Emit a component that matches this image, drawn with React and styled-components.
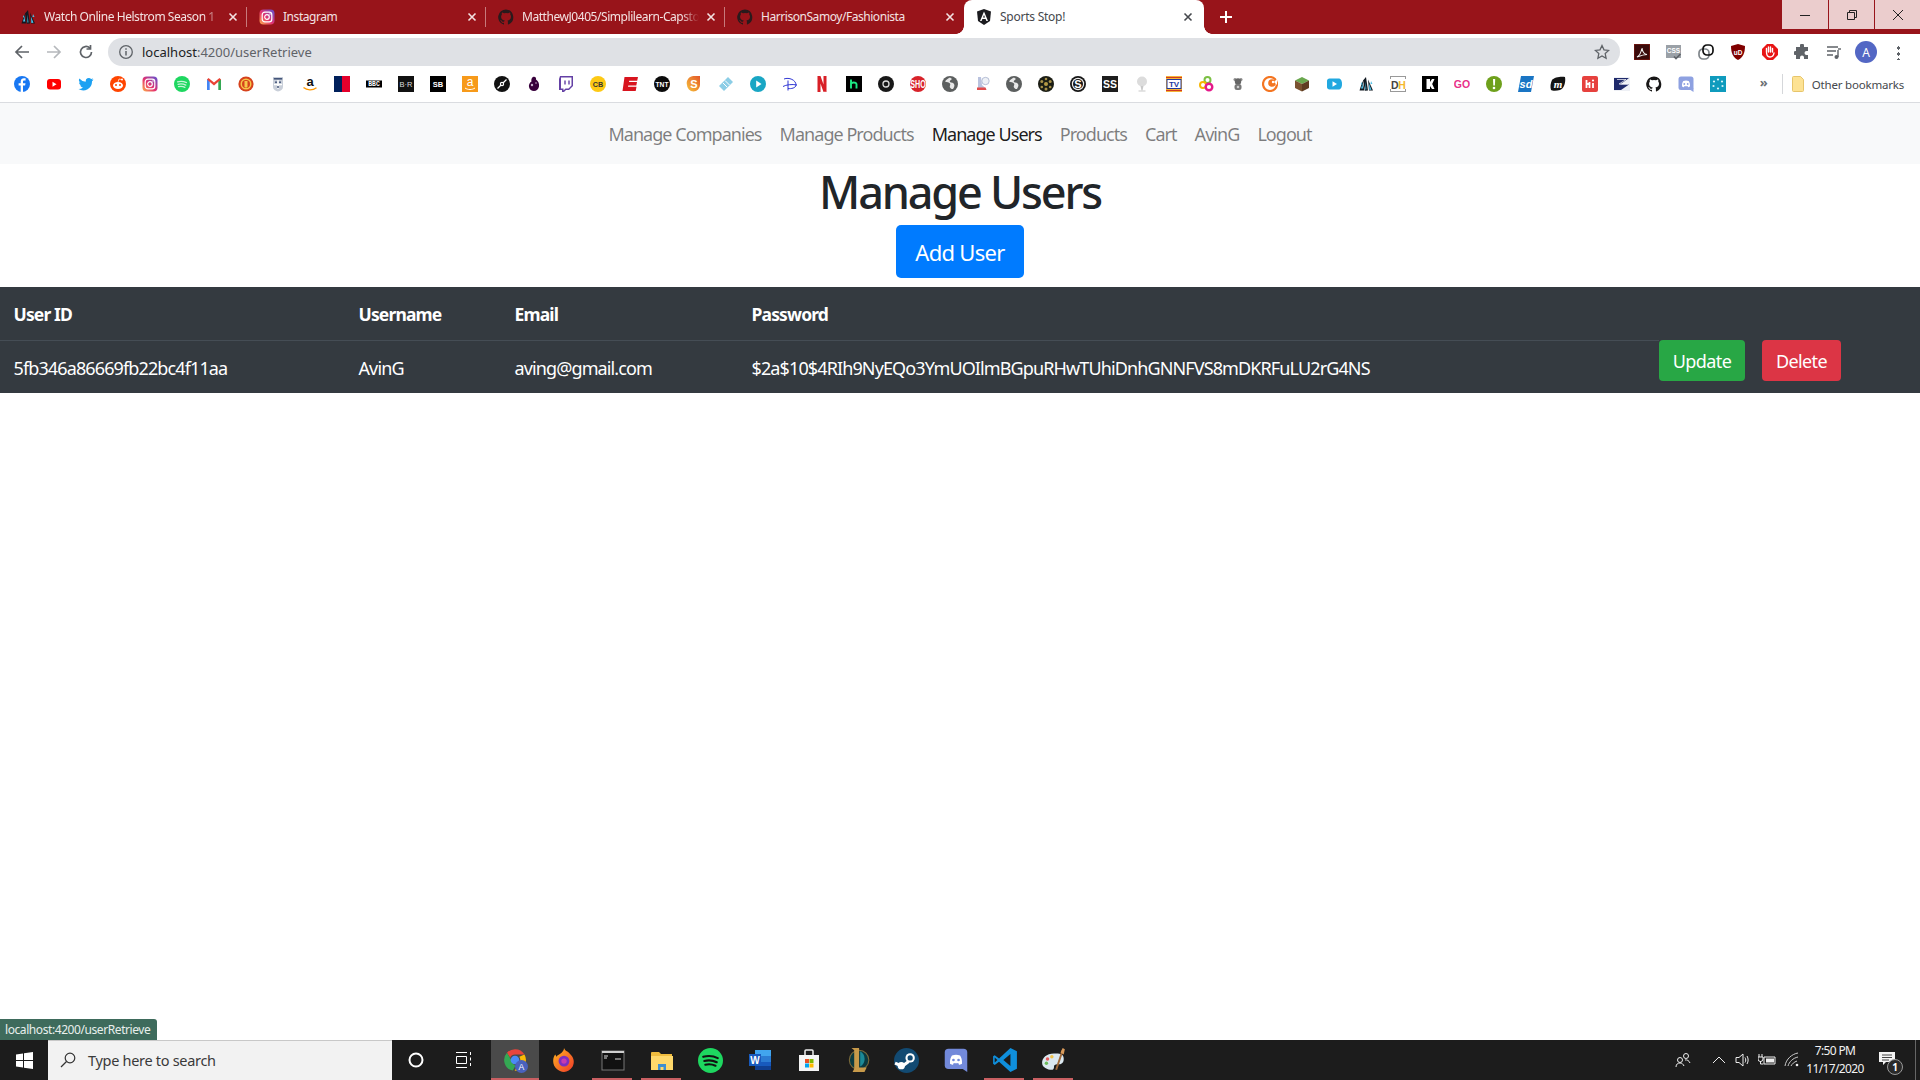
import React from "react";
import styled, { createGlobalStyle } from "styled-components";

const FONT = `"Noto Sans", "Open Sans", "Liberation Sans", sans-serif`;

const Global = createGlobalStyle`
  html, body { margin: 0; padding: 0; height: 100%; background: #fff; overflow: hidden; }
  body { font-family: ${FONT}; color: #212529; }
  * { box-sizing: border-box; }
`;

/* ---------- icons ---------- */
const T = ({ x = 8, y = 11, s = 7, c = "#fff", w = 700, f = "Liberation Sans", children, it, len }) => (
  <text x={x} y={y} fontSize={s} fill={c} fontWeight={w} fontFamily={f} textAnchor="middle" fontStyle={it ? "italic" : "normal"} textLength={len} lengthAdjust={len ? "spacingAndGlyphs" : undefined}>{children}</text>
);

const GH = "M8 .4a7.8 7.8 0 0 0-2.5 15.2c.4.1.5-.2.5-.4v-1.4c-2.2.5-2.6-1-2.6-1-.4-.9-.9-1.2-.9-1.2-.7-.5.1-.5.1-.5.8.1 1.2.8 1.2.8.7 1.2 1.9.9 2.4.7.1-.5.3-.9.5-1.1-1.7-.2-3.6-.9-3.6-3.9 0-.9.3-1.6.8-2.1-.1-.2-.4-1 .1-2.1 0 0 .7-.2 2.1.8a7.4 7.4 0 0 1 3.9 0c1.5-1 2.1-.8 2.1-.8.4 1.1.2 1.9.1 2.1.5.5.8 1.2.8 2.1 0 3-1.8 3.7-3.6 3.9.3.2.5.7.5 1.4v2.1c0 .2.1.5.5.4A7.8 7.8 0 0 0 8 .4z";

const ICONS = {
  fb: <><circle cx="8" cy="8" r="8" fill="#1877f2" /><path d="M9 16V9.6h2.1l.4-2.4H9V5.7c0-.8.3-1.3 1.3-1.3h1.3V2.3C11.2 2.2 10.6 2.2 10 2.2c-2 0-3.3 1.2-3.3 3.3v1.7H4.6v2.4h2.1V16z" fill="#fff" /></>,
  yt: <><rect x="1" y="3" width="14" height="10.5" rx="3" fill="#f00" /><path d="M6.5 5.8v5l4-2.5z" fill="#fff" /></>,
  tw: <path d="M15.5 3.4c-.6.3-1.1.4-1.8.5.6-.4 1.1-1 1.4-1.7-.6.4-1.3.6-2 .8a3.1 3.1 0 0 0-5.3 2.8A8.8 8.8 0 0 1 1.4 2.5a3.1 3.1 0 0 0 1 4.1c-.5 0-1-.2-1.4-.4 0 1.5 1.1 2.8 2.5 3.1-.5.1-.9.1-1.4 0 .4 1.2 1.5 2.1 2.9 2.1A6.3 6.3 0 0 1 .5 13a8.8 8.8 0 0 0 13.5-7.8c.6-.5 1.1-1 1.5-1.8z" fill="#1da1f2" />,
  rd: <><circle cx="8" cy="8" r="8" fill="#ff4500" /><ellipse cx="8" cy="9.5" rx="5" ry="3.5" fill="#fff" /><circle cx="6" cy="9" r="1" fill="#ff4500" /><circle cx="10" cy="9" r="1" fill="#ff4500" /><circle cx="12" cy="3.5" r="1" fill="#fff" /><path d="M8 6l1-3 3 .6" stroke="#fff" strokeWidth=".7" fill="none" /></>,
  ig: <><defs><linearGradient id="igG" x1="0" y1="1" x2="1" y2="0"><stop offset="0" stopColor="#fdb34a" /><stop offset=".45" stopColor="#e5326f" /><stop offset="1" stopColor="#5b54d6" /></linearGradient></defs><rect x=".5" y=".5" width="15" height="15" rx="4" fill="url(#igG)" /><rect x="3.2" y="3.2" width="9.6" height="9.6" rx="2.6" fill="none" stroke="#fff" strokeWidth="1.2" /><circle cx="8" cy="8" r="2.3" fill="none" stroke="#fff" strokeWidth="1.2" /><circle cx="11" cy="5" r=".7" fill="#fff" /></>,
  sp: <><circle cx="8" cy="8" r="8" fill="#1ed760" /><path d="M3.5 5.8c3-.8 6.2-.6 9 .8M4 8.3c2.5-.7 5.3-.5 7.8.8M4.5 10.7c2.1-.5 4.4-.4 6.4.7" stroke="#fff" strokeOpacity=".75" strokeWidth="1.2" strokeLinecap="round" fill="none" /></>,
  gm: <><path d="M1 14V3l2.7 2v9z" fill="#4285f4" /><path d="M15 14V3l-2.7 2v9z" fill="#34a853" /><path d="M1 3.5 2.5 2 8 6.5 13.5 2 15 3.5 8 9.5z" fill="#ea4335" /></>,
  mu: <><circle cx="8" cy="8" r="7.6" fill="#d6421c" /><circle cx="8" cy="8" r="5.5" fill="#f6c64a" /><circle cx="8" cy="8" r="4" fill="#d6421c" /><path d="M6.5 5h3v5.5l-1.500 1.500-1.500-1.500z" fill="#f6c64a" /></>,
  en: <><path d="M3 1h10v10c0 2.5-2.5 4-5 4.500C5.500 15 3 13.500 3 11z" fill="#c9cfd9" /><path d="M3.800 2h8.400v1.600H3.800z" fill="#44557a" /><path d="M8 4v9M4 8.500h8" stroke="#fff" strokeWidth="1.400" /><circle cx="6" cy="6.300" r="1" fill="#44557a" /><circle cx="10" cy="6.300" r="1" fill="#44557a" /><circle cx="8" cy="11" r="1" fill="#44557a" /></>,
  az: <><T y={10} s={13} c="#111" w={700}>a</T><path d="M1.500 11.500c3.500 3 9 3.200 13 .3" stroke="#f90" strokeWidth="1.300" fill="none" /></>,
  fr: <><rect width="8" height="16" fill="#00205b" /><rect x="8" width="8" height="16" fill="#e4002b" /></>,
  bbc: <><rect y="4.500" width="16" height="7" fill="#000" /><T x={8} y={10.400} s={6.400} c="#fff" f="Liberation Mono">BBC</T></>,
  br: <><rect width="16" height="16" fill="#111" /><T y={11} s={7.500} c="#ddd" w={400}>B·R</T></>,
  sb: <><rect width="16" height="16" fill="#000" /><T y={11} s={7.500}>SB</T></>,
  azo: <><rect width="16" height="16" fill="#f79a1a" /><T y={10} s={12} w={400}>a</T><path d="M3 12c3 2 7 2 10 0" stroke="#fff" strokeWidth="1" fill="none" /></>,
  disc: <><circle cx="8" cy="8" r="8" fill="#111" /><path d="M12.500 3.500 3.500 12.500" stroke="#fff" strokeWidth="1.200" /><circle cx="8" cy="8" r="2.200" fill="#fff" /><circle cx="8" cy="8" r="1" fill="#111" /></>,
  pl: <><path d="M7 1c2-.8 3.500.8 3 2.500 2 1.200 3.500 4 3 7-.4 2.500-2.500 4.500-5 4.500s-4.500-1.500-5-4c-.4-2 .5-4.500 2.500-5.500C5 4 5.500 1.800 7 1z" fill="#38003c" /><circle cx="6" cy="9" r="1.200" fill="#c8b3cc" /><circle cx="10" cy="7" r=".8" fill="#c8b3cc" /></>,
  tt: <><path d="M2 0h13v10l-4 4H8l-2 2H4v-2H1V3z" fill="#6441a5" /><path d="M3 1.500h10.500v8l-3 3H7.500l-2 2v-2H3z" fill="#fff" /><path d="M7 4.500v4M11 4.500v4" stroke="#6441a5" strokeWidth="1.400" /></>,
  cb: <><circle cx="8" cy="8" r="8" fill="#fdc915" /><T y={10.600} s={7.200} c="#333">CB</T></>,
  espn: <path d="M2.500 1H16l-.8 3.800H7.200l-.2 1.200h8l-.7 3.400H6.300l-.3 1.300h8.500L13.700 15H.5z" fill="#d8141e" />,
  tnt: <><circle cx="8" cy="8" r="8" fill="#0b0b0b" /><T y={10.600} s={7.500} len={13}>TNT</T></>,
  so: <><defs><linearGradient id="soG" x1="0" y1="1" x2="1" y2="0"><stop offset="0" stopColor="#f7c33a" /><stop offset="1" stopColor="#e4572a" /></linearGradient></defs><path d="M8 0h6v9a6.500 6.500 0 0 1-13 0 7 7 0 0 1 7-9z" fill="url(#soG)" /><T y={12} s={11} w={700}>S</T></>,
  tk: <><path d="M1 10 10 1l5 5-9 9z" fill="#8bcde6" /><path d="M5 7l4 4M7 4.500l4.500 4.500" stroke="#fff" strokeWidth="1" /></>,
  pp: <><circle cx="8" cy="8" r="8" fill="#19a6c4" /><path d="M6.200 4.500v7l5.300-3.500z" fill="#fff" /></>,
  dz: <><path d="M2 3c5-2 12 1 12 6 0 3-5 4-8 3.500M6 4.500v10M1 10.500c3-1.800 9-2.500 14-1.500" stroke="#2e35d4" strokeWidth="1" fill="none" /></>,
  nf: <path d="M3.500 0h3l3 8.500V0h3v16c-1-.2-2-.2-3-.1L6.500 7.500V16l-3 .3z" fill="#d81f26" />,
  hu: <><rect width="16" height="16" fill="#000" /><path d="M5 3.500v9M5 7.500c.5-1 4.800-1.700 5.500.5v4.500" stroke="#1ce783" strokeWidth="1.900" fill="none" /></>,
  oo: <><circle cx="8" cy="8" r="8" fill="#181818" /><circle cx="8" cy="8" r="3" fill="none" stroke="#ddd" strokeWidth="1.300" /></>,
  sho: <><circle cx="8" cy="8" r="8" fill="#d8232a" /><T y={11.800} s={10.500} len={15.500}>SHO</T></>,
  gl: <><circle cx="8" cy="8" r="8" fill="#5c5f5f" /><path d="M8 1.500c-2 1-4 2-5 4 2 1 4 .5 5 2s-1 2.500 0 4 1 1.500 3 1.500c1-2 2-3 1-5s-3-1-4-2 1-2 2-3z" fill="#e8e8e8" /></>,
  sc: <><path d="M4 1h3l1 8 4 3.500-1 1.500H4z" fill="#b9c2de" /><path d="M3 11.500h8.500l1 2.500H3z" fill="#e14b4b" /><circle cx="11.500" cy="5" r="3.700" fill="#eef1f6" stroke="#8d9ac0" strokeWidth=".6" /></>,
  bl: <><circle cx="8" cy="8" r="8" fill="#1b1d14" /><circle cx="8" cy="8" r="2" fill="#b59a45" /><circle cx="3.800" cy="5.500" r="1.500" fill="#a8914a" /><circle cx="12.200" cy="5.500" r="1.500" fill="#a8914a" /><circle cx="8" cy="13" r="1.500" fill="#a8914a" /><circle cx="8" cy="3" r="1.300" fill="#a8914a" /><circle cx="3.800" cy="11" r="1.300" fill="#a8914a" /><circle cx="12.200" cy="11" r="1.300" fill="#a8914a" /></>,
  ss: <><circle cx="8" cy="8" r="8" fill="#161616" /><circle cx="8" cy="8" r="6.200" fill="#eee" /><circle cx="8" cy="8" r="5" fill="#161616" /><T y={12} s={11} w={700}>S</T></>,
  sq: <><rect width="16" height="16" fill="#1d1d1d" /><T y={12} s={10.500}>SS</T></>,
  gf: <><circle cx="8" cy="5.500" r="5" fill="#dcdcdc" /><path d="M6.500 10h3l-1 4.500h-1z" fill="#c9c9c9" /><path d="M4.500 15h7" stroke="#c9c9c9" /></>,
  tv: <><rect width="16" height="16" fill="#f5b335" /><path d="M0 1.500h16M0 14.500h16" stroke="#d13a22" strokeWidth="1" /><rect x="1" y="3.500" width="14" height="9" fill="#fff" stroke="#223a9e" /><T y={11} s={8} c="#223a9e" f="Liberation Sans">TV</T></>,
  co: <><circle cx="9.500" cy="4" r="3" fill="none" stroke="#7bc043" strokeWidth="2" /><circle cx="5" cy="9" r="3" fill="none" stroke="#f7b500" strokeWidth="2" /><circle cx="11" cy="11" r="3.300" fill="none" stroke="#e5198a" strokeWidth="2.400" /></>,
  br2: <><circle cx="5" cy="3.500" r="1.500" fill="#8a8a8a" /><circle cx="11" cy="3.500" r="1.500" fill="#8a8a8a" /><circle cx="8" cy="5.500" r="3.200" fill="#666" /><rect x="4.500" y="8" width="7" height="6" rx="2.500" fill="#777" /><circle cx="8" cy="11" r="1.300" fill="#ccc" /></>,
  cr: <><circle cx="8" cy="8" r="7" fill="none" stroke="#f47521" strokeWidth="2.200" /><circle cx="10" cy="7" r="3.800" fill="#f47521" /><circle cx="11" cy="6" r="1.200" fill="#fff" /><path d="M15 3v6l-3-3z" fill="#fff" /></>,
  mc: <><path d="M8 1l7 3.500L8 8 1 4.500z" fill="#6aa84f" /><path d="M1 4.500 8 8v7.500l-7-3.500z" fill="#7a5230" /><path d="M15 4.500 8 8v7.500l7-3.500z" fill="#5e3d22" /></>,
  bp: <><path d="M1 5c0-1.500 1-2.500 2.500-2.500h9c1.800 0 3.500 1.500 3.500 5.500s-1.700 5.500-3.500 5.500h-9C2 13.500 1 12.500 1 11z" fill="#21a8e0" /><path d="M6.500 5.300v5.400L11 8z" fill="#fff" /></>,
  hs: <><path d="M1.500 14.500 4.500 5l2 9.500z" fill="#101820" /><path d="M5 4.500 8 1l2 13.500-3 .3z" fill="#101820" /><path d="M10 3.500 15 14.500h-4z" fill="#101820" /><path d="M3 12.500l1.300-4.500 1 4.500zM7.600 5.500l.8 8-1-.1zM11 7.500l2.500 6.300-2.200.1z" fill="#4fc0e8" /><path d="M2.800 8 4 6l.6 3zM13 5l1.500 3-2 0z" fill="#4fc0e8" /></>,
  dh: <><path d="M0 .5h16M0 15.500h16M.5 0v16M15.500 0v16" stroke="#999" strokeWidth="1" /><rect y="3" width="16" height="10" fill="#fff" /><text x="1" y="12.500" fontSize="10.500" fontWeight="700" fill="#444" fontFamily="Liberation Sans">D</text><text x="8.300" y="12.500" fontSize="10.500" fontWeight="700" fill="#f5b82e" fontFamily="Liberation Sans">H</text></>,
  kk: <><rect width="16" height="16" fill="#000" /><path d="M4.500 3h3.500v3l2-3h2.500l-2.300 5 2.300 5H10L8 10v3H4.500z" fill="#fff" /></>,
  go: <T y={12} s={10.500} c="#e8308a" w={700}>GO</T>,
  ex: <><circle cx="8" cy="8" r="8" fill="#6ea01c" /><path d="M7 3h2.200l-.3 6.500H7.300z" fill="#fff" /><circle cx="8" cy="12" r="1.300" fill="#fff" /></>,
  sd: <><path d="M3 0h13l-3 16H0z" fill="#1a75c4" /><T y={12} s={11} it w={700}>sd</T></>,
  mm: <><path d="M2 4c2-3 10-4 13-3 1 5-1 12-5 13-3 1-8 1-9 0-1-3-.5-7 1-10z" fill="#141414" /><T y={11.500} s={11} it f="Liberation Serif">m</T></>,
  hi: <><rect width="16" height="16" rx="2" fill="#e6413e" /><path d="M4.500 4v8M4.500 8h3M7.500 6v6M11 7v5" stroke="#fff" strokeWidth="1.800" /><circle cx="11" cy="4.500" r="1.100" fill="#fff" /></>,
  us: <><rect y="1" width="16" height="14" fill="#eef0f5" /><path d="M0 2h15L6 8.500 15 8.500 7 14H0z" fill="#1f2a6b" /><path d="M3 3.500h9L5 8h9" stroke="#fff" strokeWidth=".7" fill="none" /></>,
  gh: <path d={GH} fill="#181717" />,
  gh2: <path d={GH} fill="#2a1a1c" />,
  dc: <><rect x=".5" y=".5" width="15" height="13.500" rx="2.500" fill="#8ea1e1" /><path d="M15.500 12v4l-3-2z" fill="#8ea1e1" /><path d="M4 10.500c-.2-2.500.5-4.500 1.300-5.500 2-.7 3.400-.7 5.400 0 .8 1 1.500 3 1.300 5.500-1 .6-1.500.7-2 .7L9.500 10c-1 .3-2 .3-3 0l-.5 1.200c-.5 0-1-.1-2-.7z" fill="#fff" /><circle cx="6.300" cy="8" r=".9" fill="#8ea1e1" /><circle cx="9.700" cy="8" r=".9" fill="#8ea1e1" /></>,
  te: <><rect width="16" height="16" fill="#0f9bbd" /><g fill="#d8f4f9"><circle cx="8" cy="3.500" r="1.100" /><circle cx="12" cy="5.500" r="1.100" /><circle cx="12.500" cy="10" r="1.100" /><circle cx="8" cy="12.500" r="1.100" /><circle cx="3.500" cy="10" r="1.100" /><circle cx="4" cy="5.500" r="1.100" /></g></>,
  ng: <><path d="M8 0 1 2.500l1 9.500L8 16l6-4 1-9.500z" fill="#1b1b1f" /><path d="M8 2.500 4 12h1.600l.8-2h3.200l.8 2H12zM7 8.500l1-2.600 1 2.600z" fill="#fff" /></>,
  pdf: <><rect width="16" height="16" fill="#3a0a0a" stroke="#8c1c13" /><path d="M3 13c2-1 4-4 5-9 .3 3 2 6 5 6.500-3 0-6 1-10 2.500z" fill="none" stroke="#eee" strokeWidth="1.100" /></>,
  css: <><rect y="1" width="15" height="13" fill="#9aa0a6" /><T x={7.500} y={9} s={6.500} w={700}>CSS</T><path d="M8 12.500l2 2 4.500-4.500" stroke="#5f6368" strokeWidth="1.700" fill="none" /></>,
  ln: <><rect x="1" y="5" width="10" height="10" rx="4" fill="none" stroke="#80868b" strokeWidth="1.700" /><rect x="5" y="1" width="10" height="10" rx="4" fill="none" stroke="#111" strokeWidth="1.700" /></>,
  ub: <><path d="M8 0 15 2c0 7-2 11.500-7 14C3 13.500 1 9 1 2z" fill="#800000" /><T y={10.500} s={6.500}>uD</T></>,
  stop: <><path d="M5 0h6l5 5v6l-5 5H5l-5-5V5z" fill="#e81515" /><path d="M4.500 8V4.500M6.500 8V3M8.500 8V3M10.500 8V4.500M4.500 8c0 3 1.500 5 3.500 5s3.500-1 4-4" stroke="#fff" strokeWidth="1.400" fill="none" strokeLinecap="round" /></>,
  pz: <path d="M6 1.500a2 2 0 0 1 4 0V3h4v4h-1.500a2 2 0 0 0 0 4H14v4h-4v-1.500a2 2 0 0 0-4 0V15H2v-4h-.5a2 2 0 0 1 0-4H2V3h4z" fill="#5f6368" />,
  mq: <><path d="M1 3h11M1 7h9M1 11h6" stroke="#5f6368" strokeWidth="1.400" /><path d="M12 6v7" stroke="#5f6368" strokeWidth="1.400" /><circle cx="10.500" cy="13" r="2" fill="#5f6368" /><path d="M12 5h3" stroke="#5f6368" strokeWidth="1.400" /></>,
};

const Icon = ({ k, size = 16 }) => (
  <svg width={size} height={size} viewBox="0 0 16 16" style={{ flex: "none", display: "block" }}>{ICONS[k]}</svg>
);

/* ---------- browser tab strip ---------- */
const TabStrip = styled.div`
  height: 34px;
  background: #98141a;
  display: flex;
  align-items: center;
  padding-left: 8px;
`;
const Tab = styled.div`
  width: 238px;
  height: 34px;
  display: flex;
  align-items: center;
  padding: 0 5.5px 0 12px;
  flex: none;
  position: relative;
  ${(p) => p.$active && `
    background: #fff;
    border-radius: 8px 8px 0 0;
    width: 240px;
    padding-right: 8px;
    &::before, &::after {
      content: "";
      position: absolute;
      bottom: 0;
      width: 8px;
      height: 8px;
    }
    &::before { left: -8px; background: radial-gradient(circle at 0 0, transparent 7.5px, #fff 8px); }
    &::after { right: -8px; background: radial-gradient(circle at 100% 0, transparent 7.5px, #fff 8px); }
  `}
`;
const TabTitle = styled.span`
  flex: 1;
  min-width: 0;
  margin-left: 8px;
  font-size: 12px;
  line-height: 16px;
  margin-top: -1px;
  letter-spacing: ${(p) => (p.$active ? "-0.25px" : "-0.45px")};
  white-space: nowrap;
  overflow: hidden;
  color: ${(p) => (p.$active ? "#45484d" : "#f3e2e2")};
  ${(p) => p.$fade && `
    -webkit-mask-image: linear-gradient(90deg, #000 90%, transparent 100%);
    mask-image: linear-gradient(90deg, #000 90%, transparent 100%);
  `}
`;
const TabClose = styled.svg`
  width: 16px;
  height: 16px;
  flex: none;
  margin-left: 4px;
  stroke: ${(p) => (p.$active ? "#45484d" : "#f3e2e2")};
  stroke-width: 1.6;
`;
const TabSep = styled.div`
  width: 1px;
  height: 20px;
  flex: none;
  background: ${(p) => (p.$hidden ? "transparent" : "#c77a7c")};
`;
const NewTab = styled.svg`
  width: 14px;
  height: 14px;
  margin-left: 15px;
  flex: none;
  stroke: #fff;
  stroke-width: 2;
`;
const WindowControls = styled.div`
  margin-left: auto;
  align-self: flex-start;
  display: flex;
  height: 29px;
`;
const WinBtn = styled.div`
  width: 46px;
  height: 29px;
  background: #ebcdcd;
  display: flex;
  align-items: center;
  justify-content: center;
  & + & { border-left: 1px solid #98141a; }
  svg { width: 12px; height: 12px; stroke: #222; fill: none; stroke-width: 1; }
`;

/* ---------- toolbar ---------- */
const Toolbar = styled.div`
  height: 32px;
  background: #fff;
  display: flex;
  align-items: flex-end;
  padding: 0 14px;
  gap: 16px;
`;
const ToolIcon = styled.div`
  width: 16px;
  height: 28px;
  flex: none;
  display: flex;
  align-items: center;
  justify-content: center;
  position: relative;
  svg.nav { width: 16px; height: 16px; fill: none; stroke-width: 1.7; stroke: ${(p) => (p.$dim ? "#b5b8bc" : "#5f6368")}; }
`;
const UrlBar = styled.div`
  width: 1512px;
  height: 28px;
  margin: 0 -2px;
  flex: none;
  border-radius: 14px;
  background: #dfe1e5;
  display: flex;
  align-items: center;
  padding: 0 10px 0 10px;
  font-size: 13px;
  letter-spacing: 0;
  color: #5f6368;
`;
const UrlInfo = styled.svg`
  width: 16px;
  height: 16px;
  stroke: #5f6368;
  fill: none;
  flex: none;
  margin-right: 8px;
`;
const UrlHost = styled.span`color: #202124;`;
const UrlStar = styled.svg`
  width: 16px;
  height: 16px;
  stroke: #5f6368;
  stroke-width: 1.3;
  fill: none;
  margin-left: auto;
`;
const Avatar = styled.div`
  width: 22px;
  height: 22px;
  flex: none;
  border-radius: 50%;
  background: #5367c4;
  color: #fff;
  font-size: 12px;
  display: flex;
  align-items: center;
  justify-content: center;
`;
const Kebab = styled.div`
  width: 3px;
  height: 15px;
  background: radial-gradient(circle, #5f6368 1.5px, transparent 1.7px) 0 0 / 3px 6px repeat-y;
`;

/* ---------- bookmarks ---------- */
const BookmarkBar = styled.div`
  height: 37px;
  background: #fff;
  border-bottom: 1px solid #dadce0;
  display: flex;
  align-items: center;
  padding: 0 14px;
  gap: 16px;
`;
const OverflowMark = styled.span`
  margin-left: auto;
  font-size: 13px;
  font-weight: 700;
  color: #6b6f74;
  width: 12px;
  line-height: 1;
  margin-top: -3px;
`;
const BarSep = styled.div`
  width: 1px;
  height: 20px;
  background: #d5d7da;
  margin-left: -6px;
`;
const OtherBookmarks = styled.div`
  display: flex;
  align-items: center;
  gap: 8px;
  margin-left: -7px;
  margin-right: 2px;
  font-size: 11.5px;
  letter-spacing: -0.2px;
  color: #45484d;
  white-space: nowrap;
`;

/* ---------- the app ---------- */
const Page = styled.div`
  height: 100vh;
  display: flex;
  flex-direction: column;
  overflow: hidden;
`;
const Viewport = styled.div`
  flex: 1;
  min-height: 0;
  position: relative;
  background: #fff;
`;
const Navbar = styled.nav`
  height: 61px;
  background: #f8f9fa;
  display: flex;
  align-items: center;
  justify-content: center;
`;
const NavLink = styled.a`
  padding: 0 9px;
  font-size: 18px;
  letter-spacing: -0.95px;
  color: ${(p) => (p.$active ? "rgba(0,0,0,.9)" : "rgba(0,0,0,.5)")};
  white-space: nowrap;
`;
const Title = styled.h1`
  margin: 0 0 7px;
  height: 54px;
  line-height: 56px;
  font-size: 45px;
  font-weight: 500;
  text-align: center;
  letter-spacing: -2.2px;
  color: #212529;
`;
const Center = styled.div`
  display: flex;
  justify-content: center;
  margin-bottom: 9px;
`;
const AddButton = styled.button`
  width: 128px;
  height: 53px;
  border: 0;
  border-radius: 5px;
  padding: 0;
  background: #007bff;
  color: #fff;
  font: 400 22px ${FONT};
  letter-spacing: -0.7px;
`;
const Table = styled.div`
  background: #343a40;
  color: #fff;
  font-size: 18px;
`;
const Row = styled.div`
  display: grid;
  grid-template-columns: 345px 156px 237px 921px 1fr;
`;
const HeadCell = styled.div`
  height: 54px;
  padding: 15px 14px 0 13.5px;
  line-height: 24px;
  font-weight: 700;
  font-size: 17.5px;
  letter-spacing: -0.85px;
  border-bottom: ${(p) => (p.$last ? "0" : "1px solid #454d55")};
`;
const Cell = styled.div`
  height: 52px;
  padding: 15px 14px 0 13.5px;
  line-height: 24px;
  letter-spacing: -0.88px;
  white-space: nowrap;
`;
const ActionCell = styled.div`
  display: flex;
  align-items: flex-start;
  gap: 17px;
  margin-top: -1px;
`;
const ActionButton = styled.button`
  width: ${(p) => p.$w}px;
  height: 41px;
  border: 0;
  border-radius: 4px;
  padding: 0;
  background: ${(p) => p.$bg};
  color: #fff;
  font: 400 18px ${FONT};
  letter-spacing: -0.6px;
`;
const StatusBubble = styled.div`
  position: absolute;
  left: 0;
  bottom: 0;
  height: 21px;
  width: 157px;
  padding-left: 5px;
  background: #3e6b5c;
  color: #e8efec;
  font-size: 12px;
  line-height: 21px;
  letter-spacing: -0.42px;
  border-top-right-radius: 3px;
  white-space: nowrap;
`;

/* ---------- taskbar ---------- */
const Taskbar = styled.div`
  height: 40px;
  background: #1c1c1c;
  display: flex;
  align-items: stretch;
  color: #fff;
`;
const StartCell = styled.div`
  width: 48px;
  display: flex;
  align-items: center;
  justify-content: center;
`;
const SearchBox = styled.div`
  width: 344px;
  background: #f2f2f2;
  border-top: 1px solid #c8c8c8;
  display: flex;
  align-items: center;
  padding: 0 0 2px 12px;
  gap: 12px;
  color: #3a3a3a;
  font-size: 14.5px;
  letter-spacing: -0.3px;
`;
const TaskCell = styled.div`
  width: ${(p) => p.$w || 49}px;
  flex: none;
  display: flex;
  align-items: center;
  justify-content: center;
  position: relative;
  padding-right: ${(p) => p.$pr || 0}px;
  background: ${(p) => (p.$active ? "#4a4a4a" : "transparent")};
  ${(p) => p.$open && `
    &::after {
      content: "";
      position: absolute;
      bottom: 0;
      left: ${p.$active ? "0" : "4px"};
      right: ${p.$active ? "0" : "5px"};
      height: 2px;
      background: #c95f62;
    }
  `}
`;
const Tray = styled.div`
  margin-left: auto;
  display: flex;
  align-items: center;
  margin-right: 4px;
`;
const TrayIcon = styled.div`
  width: ${(p) => p.$w}px;
  margin-left: ${(p) => p.$ml || 0}px;
  flex: none;
  display: flex;
  justify-content: center;
  svg { display: block; }
`;
const Clock = styled.div`
  width: 60px;
  text-align: center;
  font-size: 12px;
  line-height: 18px;
  letter-spacing: -0.65px;
  white-space: nowrap;
  color: #f2f2f2;
`;
const Notify = styled.div`
  width: 51px;
  height: 40px;
  padding: 12px 0 0 14px;
  position: relative;
  border-right: 1px solid #666;
`;
const NotifyBadge = styled.span`
  position: absolute;
  left: 22px;
  top: 19px;
  width: 16px;
  height: 16px;
  border-radius: 50%;
  background: #2a2a2a;
  border: 1px solid #9a9a9a;
  font-size: 10px;
  font-weight: 700;
  line-height: 14px;
  text-align: center;
`;

const TI = ({ children, size = 24, view = "0 0 24 24" }) => (
  <svg width={size} height={size} viewBox={view} style={{ display: "block" }}>{children}</svg>
);

const TASK_APPS = [
  { key: "chrome", w: 48, active: true, open: true, svg: <TI size={26}><path d="M12 2a10 10 0 0 1 8.7 5H12a5 5 0 0 0-4.500 3L4.600 5.300A10 10 0 0 1 12 2z" fill="#e8453c" /><path d="M4.600 5.300 9 13a5 5 0 0 0 3.500 4L10 21.800A10 10 0 0 1 4.600 5.300z" fill="#34a853" /><path d="M20.700 7a10 10 0 0 1-9 15L16 14.500A5 5 0 0 0 16 9z" fill="#fbbc05" /><circle cx="12" cy="12" r="4" fill="#4b8bf5" /><circle cx="18" cy="18" r="6" fill="#4a62bd" /><text x="18" y="21" fontSize="8" fill="#fff" textAnchor="middle" fontFamily="Liberation Sans">A</text></TI> },
  { key: "firefox", svg: <TI size={26}><defs><linearGradient id="ff" x1="0" y1="0" x2="1" y2="1"><stop offset="0" stopColor="#ffb81f" /><stop offset="1" stopColor="#f0382a" /></linearGradient></defs><path d="M12 1c1 3 4 3 6 6 3 3 4 7 2 11-2 3-5 5-8 5-5 0-10-4-10-10 0-3 1-5 2-6l1 2c1-2 3-2 5-4 1-1 2-2 2-4z" fill="url(#ff)" /><circle cx="12" cy="13" r="5" fill="#7b2fc0" /><circle cx="12" cy="13" r="2.500" fill="#c63bb0" /></TI> },
  { key: "term", open: true, svg: <TI><rect x="1" y="3" width="22" height="19" fill="#111" stroke="#777" /><rect x="1" y="3" width="22" height="2" fill="#cfcfcf" /><path d="M3 8h4M3 10h3M14 11h6" stroke="#ddd" /></TI> },
  { key: "files", open: true, svg: <TI><path d="M1 5a1 1 0 0 1 1-1h7l2 2h11v15H1z" fill="#f0bc3e" /><path d="M1 8h22v14H1z" fill="#ffd86b" /><path d="M8 22v-6h8v6h-2.500v-3h-3v3z" fill="#3e8ed0" /></TI> },
  { key: "spotify", svg: <TI size={25}><circle cx="12" cy="12" r="12" fill="#1ed760" /><path d="M5 8.500c4.500-1.200 9.500-1 14 1.200M6 12.500c4-1 8-.8 12 1.200M7 16c3.200-.8 6.500-.6 9.800 1" stroke="#111" strokeWidth="2" strokeLinecap="round" fill="none" /></TI> },
  { key: "word", svg: <TI><path d="M7 2h16v20H7z" fill="#2b7cd3" /><path d="M7 2h16v6H7z" fill="#41a5ee" /><path d="M7 14h16v4H7z" fill="#185abd" /><path d="M7 18h16v4H7z" fill="#103f91" /><rect x="1" y="6" width="12" height="12" fill="#185abd" /><text x="7" y="15.500" fontSize="10" fontWeight="700" fill="#fff" textAnchor="middle" fontFamily="Liberation Sans">W</text></TI> },
  { key: "store", svg: <TI><path d="M8 7V3a1 1 0 0 1 1-1h6a1 1 0 0 1 1 1v4" stroke="#eee" strokeWidth="1.500" fill="none" /><rect x="2" y="7" width="20" height="16" fill="#f4f4f4" /><rect x="8" y="11" width="4" height="4" fill="#e84f23" /><rect x="12.500" y="11" width="4" height="4" fill="#7fba00" /><rect x="8" y="15.500" width="4" height="4" fill="#00a4ef" /><rect x="12.500" y="15.500" width="4" height="4" fill="#ffb900" /></TI> },
  { key: "lol", svg: <TI size={26}><circle cx="13" cy="12" r="9" fill="#0b3a40" stroke="#7b6a3a" /><path d="M14 4a8 8 0 0 1 0 14z" fill="#1c8a96" /><path d="M6 1h7v18h7l-2 4H7l1.500-3V3z" fill="#c79a4a" /></TI> },
  { key: "steam", svg: <TI size={25}><circle cx="12" cy="12" r="12" fill="#124a72" /><path d="M1 14.500 8 17.500l6-4.500" stroke="#fff" strokeWidth="3" fill="none" /><circle cx="7" cy="17" r="3.500" fill="#fff" /><circle cx="15.500" cy="9.500" r="4.500" fill="#fff" /><circle cx="15.500" cy="9.500" r="2.500" fill="#124a72" /></TI> },
  { key: "discord", svg: <TI view="0 0 16 16"><rect x=".5" y=".5" width="15" height="13.500" rx="2.500" fill="#7289da" /><path d="M15.500 12v4l-3-2z" fill="#7289da" /><path d="M4 10.500c-.2-2.500.5-4.500 1.300-5.500 2-.7 3.400-.7 5.400 0 .8 1 1.500 3 1.300 5.500-1 .6-1.500.7-2 .7L9.500 10c-1 .3-2 .3-3 0l-.5 1.200c-.5 0-1-.1-2-.7z" fill="#fff" /><circle cx="6.300" cy="8" r=".9" fill="#7289da" /><circle cx="9.700" cy="8" r=".9" fill="#7289da" /></TI> },
  { key: "code", open: true, svg: <TI size={26}><path d="M17 1 23 4v16l-6 3L6.500 13.500 2.500 16.500 1 15.500V8.500L2.500 7.500 6.500 10.500z" fill="#0f8fdc" /><path d="M17 6.500 10.500 12l6.500 5.500z" fill="#1c1c1c" /><path d="M2.500 9.700 5 12l-2.500 2.300z" fill="#1c1c1c" /></TI> },
  { key: "paint", open: true, svg: <TI size={26}><path d="M12 6C5 6 1 10 1 14.500S6 21 10 21c2 0 2-2 2-3s1-2 3-2 6 0 6-5-4-5-9-5z" fill="#dbe8f0" /><circle cx="6" cy="11" r="1.600" fill="#e45b5b" /><circle cx="10" cy="9" r="1.600" fill="#f0c24a" /><circle cx="5" cy="15" r="1.600" fill="#6bbb5a" /><path d="M14 21 20 3" stroke="#a06a3a" strokeWidth="1.800" /><path d="M18 5l2-4 2 1-1 5z" fill="#d99a5a" /></TI> },
];

const BOOKMARKS = ["fb","yt","tw","rd","ig","sp","gm","mu","en","az","fr","bbc","br","sb","azo","disc","pl","tt","cb","espn","tnt","so","tk","pp","dz","nf","hu","oo","sho","gl","sc","gl","bl","ss","sq","gf","tv","co","br2","cr","mc","bp","hs","dh","kk","go","ex","sd","mm","hi","us","gh","dc","te"];

const TABS = [
  { icon: "hs", title: "Watch Online Helstrom Season 1", fade: true, sep: true },
  { icon: "ig", title: "Instagram", sep: true },
  { icon: "gh2", title: "MatthewJ0405/Simplilearn-Capstone", fade: true, sep: true },
  { icon: "gh2", title: "HarrisonSamoy/Fashionista" },
  { icon: "ng", title: "Sports Stop!", active: true },
];

const NAV = ["Manage Companies", "Manage Products", "Manage Users", "Products", "Cart", "AvinG", "Logout"];

const Close = ({ active }) => (
  <TabClose $active={active} viewBox="0 0 16 16"><path d="M4.500 4.500l7 7M11.500 4.500l-7 7" /></TabClose>
);

export default function App() {
  return (
    <Page>
      <Global />
      <TabStrip>
        {TABS.map((t) => (
          <React.Fragment key={t.title}>
            <Tab $active={t.active}>
              <Icon k={t.icon} />
              <TabTitle $active={t.active} $fade={t.fade}>{t.title}</TabTitle>
              <Close active={t.active} />
            </Tab>
            {!t.active && <TabSep $hidden={!t.sep} />}
          </React.Fragment>
        ))}
        <NewTab viewBox="0 0 14 14"><path d="M7 1v12M1 7h12" /></NewTab>
        <WindowControls>
          <WinBtn><svg viewBox="0 0 12 12"><path d="M1 6.500h10" /></svg></WinBtn>
          <WinBtn><svg viewBox="0 0 12 12"><path d="M1.500 3.500h7v7h-7zM3.500 3.500v-2h7v7h-2" /></svg></WinBtn>
          <WinBtn><svg viewBox="0 0 12 12"><path d="M1 1l10 10M11 1 1 11" /></svg></WinBtn>
        </WindowControls>
      </TabStrip>

      <Toolbar>
        <ToolIcon><svg className="nav" viewBox="0 0 16 16"><path d="M15 8H2M8 2 2 8l6 6" /></svg></ToolIcon>
        <ToolIcon $dim><svg className="nav" viewBox="0 0 16 16"><path d="M1 8h13M8 2l6 6-6 6" /></svg></ToolIcon>
        <ToolIcon><svg className="nav" viewBox="0 0 16 16"><path d="M13.500 8A5.500 5.500 0 1 1 11.800 4M12.500 1v4h-4" /></svg></ToolIcon>
        <UrlBar>
          <UrlInfo viewBox="0 0 16 16"><circle cx="8" cy="8" r="6.300" strokeWidth="1.300" /><path d="M8 7v4.500M8 4.300v1.500" strokeWidth="1.500" /></UrlInfo>
          <UrlHost>localhost</UrlHost>:4200/userRetrieve
          <UrlStar viewBox="0 0 16 16"><path d="M8 1.500l2 4.300 4.700.6-3.500 3.200.9 4.700L8 12l-4.100 2.300.9-4.700L1.300 6.400 6 5.800z" /></UrlStar>
        </UrlBar>
        {["pdf", "css", "ln", "ub", "stop", "pz", "mq"].map((k) => (
          <ToolIcon key={k}><Icon k={k} /></ToolIcon>
        ))}
        <ToolIcon><Avatar>A</Avatar></ToolIcon>
        <ToolIcon><Kebab /></ToolIcon>
      </Toolbar>

      <BookmarkBar>
        {BOOKMARKS.map((k, i) => <Icon key={i} k={k} />)}
        <OverflowMark>»</OverflowMark>
        <BarSep />
        <OtherBookmarks>
          <svg width="12" height="16" viewBox="0 0 12 16"><path d="M.5 1.500a1 1 0 0 1 1-1h7l3 3v11a1 1 0 0 1-1 1h-9a1 1 0 0 1-1-1z" fill="#fde293" stroke="#e7c56b" /></svg>
          Other bookmarks
        </OtherBookmarks>
      </BookmarkBar>

      <Viewport>
        <Navbar>
          {NAV.map((n) => <NavLink key={n} $active={n === "Manage Users"}>{n}</NavLink>)}
        </Navbar>
        <Title>Manage Users</Title>
        <Center><AddButton>Add User</AddButton></Center>
        <Table>
          <Row>
            <HeadCell>User ID</HeadCell>
            <HeadCell>Username</HeadCell>
            <HeadCell>Email</HeadCell>
            <HeadCell>Password</HeadCell>
            <HeadCell $last />
          </Row>
          <Row>
            <Cell>5fb346a86669fb22bc4f11aa</Cell>
            <Cell>AvinG</Cell>
            <Cell>aving@gmail.com</Cell>
            <Cell>$2a$10$4RIh9NyEQo3YmUOIlmBGpuRHwTUhiDnhGNNFVS8mDKRFuLU2rG4NS</Cell>
            <ActionCell>
              <ActionButton $bg="#28a745" $w={86}>Update</ActionButton>
              <ActionButton $bg="#dc3545" $w={79}>Delete</ActionButton>
            </ActionCell>
          </Row>
        </Table>
        <StatusBubble>localhost:4200/userRetrieve</StatusBubble>
      </Viewport>

      <Taskbar>
        <StartCell>
          <svg width="17" height="17" viewBox="0 0 17 17" fill="#fff"><path d="M0 2.400 7 1.400v6.600H0zM8 1.300 17 0v8H8zM0 9h7v6.600L0 14.600zM8 9h9v8L8 15.700z" /></svg>
        </StartCell>
        <SearchBox>
          <svg width="16" height="16" viewBox="0 0 16 16" fill="none" stroke="#333" strokeWidth="1.200"><circle cx="10" cy="6" r="4.800" /><path d="M6.500 9.500 1 15" /></svg>
          Type here to search
        </SearchBox>
        <TaskCell $w={48}>
          <svg width="16" height="16" viewBox="0 0 16 16" fill="none" stroke="#fff" strokeWidth="2"><circle cx="8" cy="8" r="6.500" /></svg>
        </TaskCell>
        <TaskCell $w={51} $pr={4}>
          <svg width="18" height="18" viewBox="0 0 18 18" fill="none" stroke="#fff" strokeWidth="1"><path d="M1 1.500h11M1 16.500h11M1.500 5.500h10v7h-10zM15.500 1v3M15.500 6.500v3M15.500 12v3" /></svg>
        </TaskCell>
        {TASK_APPS.map((a) => (
          <TaskCell key={a.key} $w={a.w} $active={a.active} $open={a.open}>{a.svg}</TaskCell>
        ))}
        <Tray>
          <TrayIcon $w={24}>
            <svg width="16" height="16" viewBox="0 0 16 16" fill="none" stroke="#eee" strokeWidth="1"><circle cx="5" cy="8" r="2.500" /><path d="M1 15c0-3 2-4 4-4s3 1 4 3" /><circle cx="11" cy="4" r="2.500" /><path d="M10 8c2-.5 4 .5 5 3" /></svg>
          </TrayIcon>
          <TrayIcon $w={24} $ml={12}>
            <svg width="14" height="8" viewBox="0 0 14 8" fill="none" stroke="#eee" strokeWidth="1"><path d="M1 7l6-6 6 6" /></svg>
          </TrayIcon>
          <TrayIcon $w={24}>
            <svg width="16" height="16" viewBox="0 0 16 16" fill="none" stroke="#eee" strokeWidth="1"><path d="M1 5.500h3l4-3.500v12l-4-3.500H1z" /><path d="M10 5.500c1 1.500 1 3.500 0 5M12 4c1.500 2.500 1.500 5.500 0 8" /></svg>
          </TrayIcon>
          <TrayIcon $w={24}>
            <svg width="18" height="14" viewBox="0 0 18 14" fill="none" stroke="#eee" strokeWidth="1"><path d="M6 4h11v7H6zM1 1v3M4 1v3M0 4h5v2a2 2 0 0 1-5 0zM2.500 8v3h3" /><rect x="8" y="5.500" width="8" height="4" fill="#eee" stroke="none" /></svg>
          </TrayIcon>
          <TrayIcon $w={26}>
            <svg width="16" height="16" viewBox="0 0 16 16" fill="none" stroke="#ccc" strokeWidth="1"><path d="M1 14C2 7 8 2 14 1M4 14c1-4 5-8 10-9M7 14c1-2 3-4 6-5" /><circle cx="13" cy="13" r="1.300" fill="#eee" stroke="none" /></svg>
          </TrayIcon>
          <Clock>7:50 PM<br />11/17/2020</Clock>
          <Notify>
            <svg width="16" height="14" viewBox="0 0 16 14" fill="#f4f4f4" style={{ display: "block" }}><path d="M0 0h16v10H7l-3 3v-3H0z" /><path d="M3 3h10M3 5.500h10M3 8h7" stroke="#444" strokeWidth="1" /></svg>
            <NotifyBadge>1</NotifyBadge>
          </Notify>
        </Tray>
      </Taskbar>
    </Page>
  );
}
